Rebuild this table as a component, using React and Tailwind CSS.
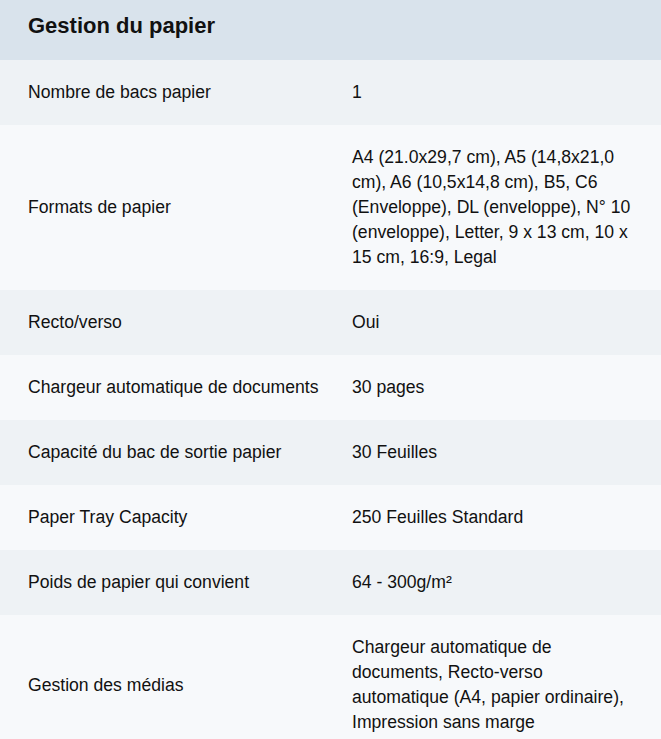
const rows = [
  ['Nombre de bacs papier', '1'],
  [
    'Formats de papier',
    'A4 (21.0x29,7 cm), A5 (14,8x21,0 cm), A6 (10,5x14,8 cm), B5, C6 (Enveloppe), DL (enveloppe), N° 10 (enveloppe), Letter, 9 x 13 cm, 10 x 15 cm, 16:9, Legal',
  ],
  ['Recto/verso', 'Oui'],
  ['Chargeur automatique de documents', '30 pages'],
  ['Capacité du bac de sortie papier', '30 Feuilles'],
  ['Paper Tray Capacity', '250 Feuilles Standard'],
  ['Poids de papier qui convient', '64 - 300g/m²'],
  [
    'Gestion des médias',
    'Chargeur automatique de documents, Recto-verso automatique (A4, papier ordinaire), Impression sans marge',
  ],
];

export default function App() {
  return (
    <div className="w-[661px] font-['Liberation_Sans',Arial,sans-serif] text-[#111]">
      <div className="h-[60px] bg-[#d9e3ec] px-7 flex items-center">
        <h2 className="text-[22px] font-bold leading-none pb-[9px]">Gestion du papier</h2>
      </div>
      {rows.map(([label, value], i) => (
        <div
          key={label}
          className={`grid grid-cols-[324px_1fr] text-[17.6px] leading-[25px] ${i % 2 === 0 ? 'bg-[#eef2f5]' : 'bg-[#f7f9fb]'}`}
        >
          <div className="pl-7 pr-1 py-5 flex items-center">{label}</div>
          <div className="pl-7 pr-7 py-5 flex items-center">{value}</div>
        </div>
      ))}
    </div>
  );
}
